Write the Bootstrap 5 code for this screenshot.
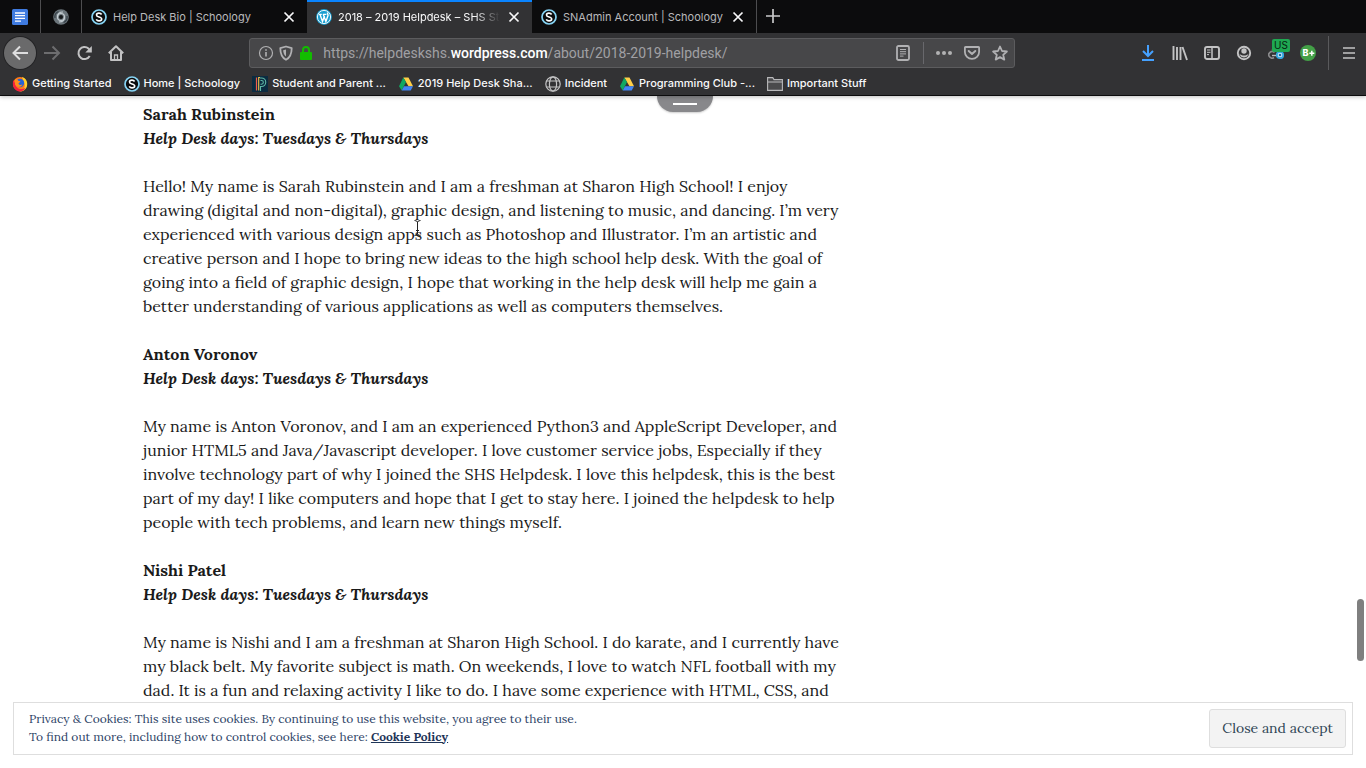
<!DOCTYPE html>
<html lang="en">
<head>
<meta charset="utf-8">
<meta name="viewport" content="width=device-width, initial-scale=1">
<title>2018 – 2019 Helpdesk – SHS</title>
<link href="https://cdn.jsdelivr.net/npm/bootstrap@5.3.0/dist/css/bootstrap.min.css" rel="stylesheet">
<style>
  body { font-family: Inter, "Liberation Sans", sans-serif; background: #fff; }
  svg { display: block; flex: none; }
  button, a { color: inherit; }
  .plain { background: none; border: 0; padding: 0; display: flex; align-items: center; justify-content: center; }

  /* browser chrome */
  .chrome { background: #323234; color: #f9f9fa; border-bottom: 1px solid #0c0c0d; box-shadow: 0 1px 4px rgba(0,0,0,.25); position: relative; z-index: 2; }
  .tab-strip { background: #0c0c0d; height: 33px; font-size: 11px; color: #b9b9bb; }
  .pinned { width: 41px; border-right: 1px solid #4d4d4f; }
  .browser-tab { width: 225px; padding: 0 10px 0 9px; gap: 6px; color: #b9b9bb; }
  .browser-tab.current { background: #323234; color: #f9f9fa; box-shadow: inset 0 2px #0a84ff; }
  .browser-tab.last { border-right: 1px solid #4d4d4f; }
  .tab-label { flex: 1 1 0; min-width: 0; overflow: hidden; white-space: nowrap; line-height: 18px; }
  .current .tab-label { -webkit-mask-image: linear-gradient(to left, transparent, #000 26px); mask-image: linear-gradient(to left, transparent, #000 26px); }
  .tab-close { width: 16px; height: 16px; color: #f9f9fa; }
  .tool-row { height: 39px; padding: 0 1px 0 4px; color: #c3c3c4; }
  .tool { width: 32px; height: 32px; }
  .tool-back { background: #6a6a6b; border-radius: 50%; box-shadow: 0 0 0 1px #232325; color: #dededf; }
  .space-left, .space-right { flex: 13 1 0; }
  .address { flex: 83 1 0; min-width: 0; height: 30px; border: 1px solid #5c5c5e; border-radius: 3px; background: #474749; padding: 0 6px 0 8px; color: #b1b1b3; }
  .url { font: 14px/20px Roboto, "Liberation Sans", sans-serif; flex: 1 1 0; min-width: 0; overflow: hidden; white-space: nowrap; color: #a0a0a4; margin-left: 9px; padding-top: 1px; }
  .url b { font-weight: 500; color: #fff; }
  .rule { width: 1px; height: 22px; background: #68686c; }
  .rule.tall { height: 34px; background: #5a5a5c; }
  .region { position: absolute; left: 12px; top: 2px; background: #1fa852; color: #06240f; border-radius: 2px; padding: 0 2px; font-size: 10px; line-height: 13px; }
  .marks { height: 23px; padding: 0 12px; gap: 12px; font-size: 11px; font-weight: 500; white-space: nowrap; overflow: hidden; }
  .marks a { display: flex; align-items: center; gap: 4px; text-decoration: none; color: #f9f9fa; }

  /* page */
  .view { flex: 1 1 0; min-height: 0; overflow: hidden; }
  .wrap { max-width: 1080px; padding-top: 6px; }
  .bios { max-width: 698px; font-family: Lora, "Liberation Serif", serif; font-size: 16px; line-height: 24px; color: #1a1a1a; }
  .bios h2, .bios h3 { font-size: 16px; line-height: 24px; font-weight: 700; margin: 0; }
  .bios h3 { font-style: italic; }
  .bios p { margin: 24px 0; }
  .pull { position: absolute; top: 0; left: calc(50% - 26px); width: 56px; height: 16px; background: #88888b; border-radius: 0 0 18px 18px; box-shadow: 0 1px 2px rgba(0,0,0,.2); }
  .pull i { width: 24px; height: 2px; background: #fff; }
  .beam { position: absolute; left: 413px; top: 123px; }
  .thumb { position: absolute; right: 2px; bottom: 107px; width: 7px; height: 62px; border-radius: 4px; background: #7f7f7f; }
  .cookies { position: absolute; left: 13px; right: 13px; bottom: 13px; border: 1px solid #dedede; background: #fff; padding: 6px 6px 6px 15px; font: 12px/18px Lora, "Liberation Serif", serif; color: #2e4467; }
  .cookies p { margin: 0; padding-bottom: 2px; }
  .cookies a { font-weight: 700; color: #1f3558; }
  .accept { font-size: 14px; line-height: 23px; padding: 7px 12px; border: 1px solid #dedede; border-radius: 3px; background: #f3f3f3; color: #2e4453; white-space: nowrap; }
</style>
</head>
<body class="vh-100 d-flex flex-column overflow-hidden">

<svg width="0" height="0" class="position-absolute" aria-hidden="true">
  <symbol id="schoology" viewBox="0 0 16 16"><circle cx="8" cy="8" r="7" fill="#0b0b0c" stroke="#86d3f3" stroke-width="1.700"/><path d="M10.600 5.500C10 4.500 9 4.100 8 4.100c-1.400 0-2.500.7-2.500 1.900 0 2.600 5.200 1.300 5.200 4 0 1.200-1.200 1.900-2.700 1.900-1.200 0-2.200-.5-2.800-1.500" fill="none" stroke="#fff" stroke-width="1.600"/></symbol>
  <symbol id="close" viewBox="0 0 16 16"><path d="M3.500 3.500l9 9m0-9l-9 9" stroke="currentColor" stroke-width="1.700" fill="none"/></symbol>
  <symbol id="drive" viewBox="0 0 16 16"><path d="M5.300 1.500h5.200L15 10.200h-4.500z" fill="#ffcf48"/><path d="M5.300 1.500L8 6 3.700 14.500 1 10.200z" fill="#11a861"/><path d="M6 10.200h9l-2.300 4.300h-9z" fill="#4285f4"/></symbol>
</svg>

<header class="chrome flex-shrink-0">
  <div class="tab-strip d-flex" role="tablist">
    <button class="plain pinned" role="tab" aria-label="Docs"><svg width="16" height="16" viewBox="0 0 16 16"><rect width="16" height="16" rx="1.500" fill="#3f7be0"/><path d="M3 4h10M3 6.700h10M3 9.400h10M3 12.100h6" stroke="#fff" stroke-width="1.300"/></svg></button>
    <button class="plain pinned" role="tab" aria-label="Swirl"><svg width="16" height="16" viewBox="0 0 16 16"><circle cx="8" cy="8" r="7.800" fill="#6b757b"/><g fill="none" stroke="#c3ccd1" stroke-width="1.200"><path d="M4.500 8a3.500 3.500 0 0 1 7 0c0 3-2 5-5.500 5"/><path d="M11.500 8a3.500 3.500 0 0 1-7 0c0-3 2-5 5.500-5"/></g><path d="M2 9c-.5-3 1-5.500 3.500-6.500M14 7c.5 3-1 5.500-3.500 6.500" fill="none" stroke="#39434a" stroke-width="1.300"/><circle cx="8" cy="8" r="2" fill="#16191b"/></svg></button>
    <div class="browser-tab d-flex align-items-center" role="tab"><svg width="16" height="16"><use href="#schoology"/></svg><span class="tab-label">Help Desk Bio | Schoology</span><button class="plain tab-close" aria-label="Close tab"><svg width="16" height="16"><use href="#close"/></svg></button></div>
    <div class="browser-tab current d-flex align-items-center" role="tab" aria-selected="true"><svg width="16" height="16" viewBox="0 0 16 16"><circle cx="8" cy="8" r="7.900" fill="#1b9ed0"/><circle cx="8" cy="8" r="6.600" fill="none" stroke="#fff" stroke-width=".9"/><path d="M2.800 5.400h3m1 0h3.600M4 5.400l2.500 7 2-5.600m-1.200-1.400l2.600 7 2.100-5.800c.3-1-.9-1.600-.4-3" fill="none" stroke="#fff" stroke-width="1.400"/></svg><span class="tab-label">2018 – 2019 Helpdesk – SHS St</span><button class="plain tab-close" aria-label="Close tab"><svg width="16" height="16"><use href="#close"/></svg></button></div>
    <div class="browser-tab last d-flex align-items-center" role="tab"><svg width="16" height="16"><use href="#schoology"/></svg><span class="tab-label">SNAdmin Account | Schoology</span><button class="plain tab-close" aria-label="Close tab"><svg width="16" height="16"><use href="#close"/></svg></button></div>
    <button class="plain tool" aria-label="New tab"><svg width="14" height="14" viewBox="0 0 14 14"><path d="M7 0v14M0 7h14" stroke="#c9c9ca" stroke-width="1.700"/></svg></button>
  </div>

  <div class="tool-row d-flex align-items-center">
    <button class="plain tool tool-back" aria-label="Back"><svg width="18" height="18" viewBox="0 0 18 18"><path d="M17 9H2.500M9 2.500L2.500 9 9 15.500" fill="none" stroke="currentColor" stroke-width="2"/></svg></button>
    <button class="plain tool" aria-label="Forward"><svg width="18" height="18" viewBox="0 0 18 18"><path d="M1 9h14.500M9.500 2.500L16 9l-6.500 6.500" fill="none" stroke="#6d6d6f" stroke-width="2"/></svg></button>
    <button class="plain tool" aria-label="Reload"><svg width="16" height="16" viewBox="0 0 16 16"><path d="M13.700 11A6 6 0 1 1 12.500 3.600L14 5.500" fill="none" stroke="currentColor" stroke-width="2"/><path d="M15.800 1v6.500H9.300z" fill="currentColor"/></svg></button>
    <button class="plain tool" aria-label="Home"><svg width="16" height="16" viewBox="0 0 16 16"><path d="M.8 8.300L8 1.200l7.200 7.100M3 7v8h10V7" fill="none" stroke="currentColor" stroke-width="2" stroke-linejoin="round"/><path d="M6.500 15v-5h3v5" fill="none" stroke="currentColor" stroke-width="1.300"/></svg></button>
    <div class="space-left"></div>
    <div class="address d-flex align-items-center">
      <svg width="16" height="16" viewBox="0 0 16 16"><circle cx="8" cy="8" r="6.500" fill="none" stroke="currentColor" stroke-width="1.200"/><path d="M8 7v4.500M8 4.200v1.600" stroke="currentColor" stroke-width="1.600"/></svg>
      <svg class="ms-1" width="16" height="16" viewBox="0 0 16 16"><path d="M8 1.500l5.700 1.700c0 5-1 9-5.700 11.600C3.300 12.200 2.300 8.200 2.300 3.200z" fill="none" stroke="currentColor" stroke-width="1.800" stroke-linejoin="round"/><path d="M8 4.500v7C6 9.800 5.300 8 5.200 5.300z" fill="currentColor"/></svg>
      <svg class="ms-1" width="16" height="16" viewBox="0 0 16 16"><rect x="2" y="7" width="12" height="8" rx="1" fill="#12bc00"/><path d="M5 8V5a3 3 0 0 1 6 0v3" fill="none" stroke="#12bc00" stroke-width="2"/></svg>
      <div class="url">https://helpdeskshs.<b>wordpress.com</b>/about/2018-2019-helpdesk/</div>
      <button class="plain me-2" aria-label="Reader view"><svg width="24" height="16" viewBox="0 0 24 16"><rect x="6" y="1" width="12" height="14" rx="1.500" fill="none" stroke="currentColor" stroke-width="1.800"/><path d="M9 4.500h6M9 6.700h6M9 8.900h6M9 11.100h3.500" stroke="currentColor" stroke-width="1"/></svg></button>
      <span class="rule"></span>
      <button class="plain ms-2 px-1" aria-label="Page actions"><svg width="16" height="16" viewBox="0 0 16 16"><circle cx="2" cy="8" r="2" fill="currentColor"/><circle cx="8" cy="8" r="2" fill="currentColor"/><circle cx="14" cy="8" r="2" fill="currentColor"/></svg></button>
      <button class="plain px-2" aria-label="Save to Pocket"><svg width="16" height="16" viewBox="0 0 16 16"><path d="M1.500 2h13c.4 0 .6.200.6.600V7a7.100 6.800 0 0 1-14.200 0V2.600c0-.4.200-.6.600-.6z" fill="none" stroke="currentColor" stroke-width="1.800"/><path d="M4.700 6L8 9l3.300-3" fill="none" stroke="currentColor" stroke-width="2" stroke-linecap="round" stroke-linejoin="round"/></svg></button>
      <button class="plain ps-1" aria-label="Bookmark"><svg width="16" height="16" viewBox="0 0 16 16"><path d="M8 1.500l2 4.500 4.900.5-3.700 3.300 1.100 4.800L8 12.100l-4.300 2.500 1.100-4.800L1.100 6.500 6 6z" fill="none" stroke="currentColor" stroke-width="1.800" stroke-linejoin="round"/></svg></button>
    </div>
    <div class="space-right"></div>
    <button class="plain tool" aria-label="Downloads"><svg width="16" height="16" viewBox="0 0 16 16"><path d="M8 0v11M3 6l5 5 5-5M2 15h12" fill="none" stroke="#45a1ff" stroke-width="2"/></svg></button>
    <button class="plain tool" aria-label="Library"><svg width="16" height="16" viewBox="0 0 16 16"><path d="M1.500 1v14M5 2v13M8.500 2v13M10.500 2l4.500 13" fill="none" stroke="currentColor" stroke-width="1.900"/></svg></button>
    <button class="plain tool" aria-label="Sidebars"><svg width="16" height="16" viewBox="0 0 16 16"><rect x="1" y="2" width="14" height="12" rx="2" fill="none" stroke="currentColor" stroke-width="1.900"/><path d="M8 2v12" stroke="currentColor" stroke-width="1.500"/><path d="M3 5h3.500M3 7.300h3.500M3 9.600h2" stroke="currentColor" stroke-width="1"/></svg></button>
    <button class="plain tool" aria-label="Account"><svg width="16" height="16" viewBox="0 0 16 16"><circle cx="8" cy="8" r="6.200" fill="none" stroke="currentColor" stroke-width="1.900"/><circle cx="8" cy="6" r="2.700" fill="currentColor"/><path d="M3.500 8.500C5 11.200 11 11.200 12.500 8.500c0 0-.5 4-4.500 4s-4.500-4-4.500-4z" fill="currentColor"/></svg></button>
    <button class="plain tool position-relative" aria-label="Proxy region"><svg width="16" height="16" viewBox="0 0 16 16"><path d="M6.500 7.500a3.300 3.300 0 1 0-.5 5" fill="none" stroke="#8b8b8d" stroke-width="1.600"/><path d="M4 10.500h4" stroke="#b9b9bb" stroke-width="1.400"/><circle cx="12" cy="10" r="3.200" fill="#cfe9f7" stroke="#35a7df" stroke-width="1.800"/><circle cx="12" cy="10" r="1.300" fill="#1c6f9f"/><path d="M4 5l3-2" stroke="#d8a93c" stroke-width="1.300"/></svg><span class="region">US</span></button>
    <button class="plain tool" aria-label="B plus"><svg width="16" height="16" viewBox="0 0 16 16"><circle cx="8" cy="8" r="8" fill="#43a047"/><text x="2.500" y="11.200" font-family="Inter, sans-serif" font-weight="800" font-size="9" fill="#fff">B</text><path d="M9.300 8.300h5M11.800 5.800v5" stroke="#fff" stroke-width="1.500"/></svg></button>
    <span class="rule tall ms-1"></span>
    <button class="plain tool ms-1" aria-label="Menu"><svg width="12" height="12" viewBox="0 0 12 12"><path d="M0 1h12M0 6h12M0 11h12" stroke="currentColor" stroke-width="1.700"/></svg></button>
  </div>

  <nav class="marks d-flex align-items-center" aria-label="Bookmarks">
    <a href="#"><svg width="16" height="16" viewBox="0 0 16 16"><circle cx="8" cy="8" r="7" fill="#ff7a18"/><path d="M10 1c4 1 6 5 5 9-1 4-5 6-8 5.500 5-1 7-5 5-9z" fill="#ffd02e"/><path d="M1.500 4C0 8 1 14 7 15.400c4 0 6-2 6.500-4-3 3-9 2-10-3z" fill="#f5223d"/><circle cx="8" cy="7" r="4.200" fill="#2463d8"/><path d="M3 3.500c1.500-.5 3 .2 3.500 1.500 1 0 2 .2 2 .8-1 .8-2 1-2 2.200 1 1.500 3 1 4 .3-.5 3-6 4-7.500.2z" fill="#ff8e1c"/></svg>Getting Started</a>
    <a href="#"><svg width="16" height="16"><use href="#schoology"/></svg>Home | Schoology</a>
    <a href="#"><svg width="16" height="16" viewBox="0 0 16 16"><rect width="16" height="16" fill="#0b2b40"/><path d="M4.500 1.500v13" stroke="#ef5b4c" stroke-width="1.200"/><path d="M6.700 14.500v-13H8" fill="none" stroke="#f0c14b" stroke-width="1.100"/><path d="M8 2h1.500a4 4 0 0 1 0 8.500H8.500V15M8.500 4.500h1a1.800 1.800 0 0 1 0 3.700h-1" fill="none" stroke="#5fb8a5" stroke-width="1.100"/></svg>Student and Parent ...</a>
    <a href="#"><svg width="16" height="16"><use href="#drive"/></svg>2019 Help Desk Sha...</a>
    <a href="#"><svg width="16" height="16" viewBox="0 0 16 16"><g fill="none" stroke="#c3c3c4" stroke-width="1.200"><circle cx="8" cy="8" r="7.200"/><ellipse cx="8" cy="8" rx="3.600" ry="7.200"/><path d="M1.500 5h13M1.500 11h13"/></g></svg>Incident</a>
    <a href="#"><svg width="16" height="16"><use href="#drive"/></svg>Programming Club -...</a>
    <a href="#"><svg width="16" height="16" viewBox="0 0 16 16"><path d="M.6 14.400V1.600h5.200l1.200 2h8.400v10.800zM.6 6h14.800" fill="#4a4a4c" stroke="#b9b9bb" stroke-width="1.100"/></svg>Important Stuff</a>
  </nav>
</header>

<main class="view position-relative">
  <div class="wrap mx-auto">
    <article class="bios">
      <h2>Sarah Rubinstein</h2>
      <h3>Help Desk days: Tuesdays &amp; Thursdays</h3>
      <p>Hello! My name is Sarah Rubinstein and I am a freshman at Sharon High School! I enjoy drawing (digital and non-digital), graphic design, and listening to music, and dancing. I’m very experienced with various design apps such as Photoshop and Illustrator. I’m an artistic and creative person and I hope to bring new ideas to the high school help desk. With the goal of going into a field of graphic design, I hope that working in the help desk will help me gain a better understanding of various applications as well as computers themselves.</p>
      <h2>Anton Voronov</h2>
      <h3>Help Desk days: Tuesdays &amp; Thursdays</h3>
      <p>My name is Anton Voronov, and I am an experienced Python3 and AppleScript Developer, and junior HTML5 and Java/Javascript developer. I love customer service jobs, Especially if they involve technology part of why I joined the SHS Helpdesk. I love this helpdesk, this is the best part of my day! I like computers and hope that I get to stay here. I joined the helpdesk to help people with tech problems, and learn new things myself.</p>
      <h2>Nishi Patel</h2>
      <h3>Help Desk days: Tuesdays &amp; Thursdays</h3>
      <p>My name is Nishi and I am a freshman at Sharon High School. I do karate, and I currently have my black belt. My favorite subject is math. On weekends, I love to watch NFL football with my dad. It is a fun and relaxing activity I like to do. I have some experience with HTML, CSS, and</p>
    </article>
  </div>
  <button class="plain pull" aria-label="Show toolbar"><i></i></button>
  <svg class="beam" width="9" height="18" viewBox="0 0 9 18"><path d="M1.500 1.500q3 0 3 2 0-2 3-2M4.500 3v12M1.500 16.500q3 0 3-2 0 2 3 2M3 11.500h3" fill="none" stroke="#222" stroke-width="1"/></svg>
  <div class="thumb"></div>
  <section class="cookies d-flex align-items-center justify-content-between" aria-label="Cookie notice">
    <p>Privacy &amp; Cookies: This site uses cookies. By continuing to use this website, you agree to their use.<br>To find out more, including how to control cookies, see here: <a href="#">Cookie Policy</a></p>
    <button class="accept">Close and accept</button>
  </section>
</main>
<script src="https://cdn.jsdelivr.net/npm/bootstrap@5.3.0/dist/js/bootstrap.bundle.min.js"></script>
</body>
</html>
